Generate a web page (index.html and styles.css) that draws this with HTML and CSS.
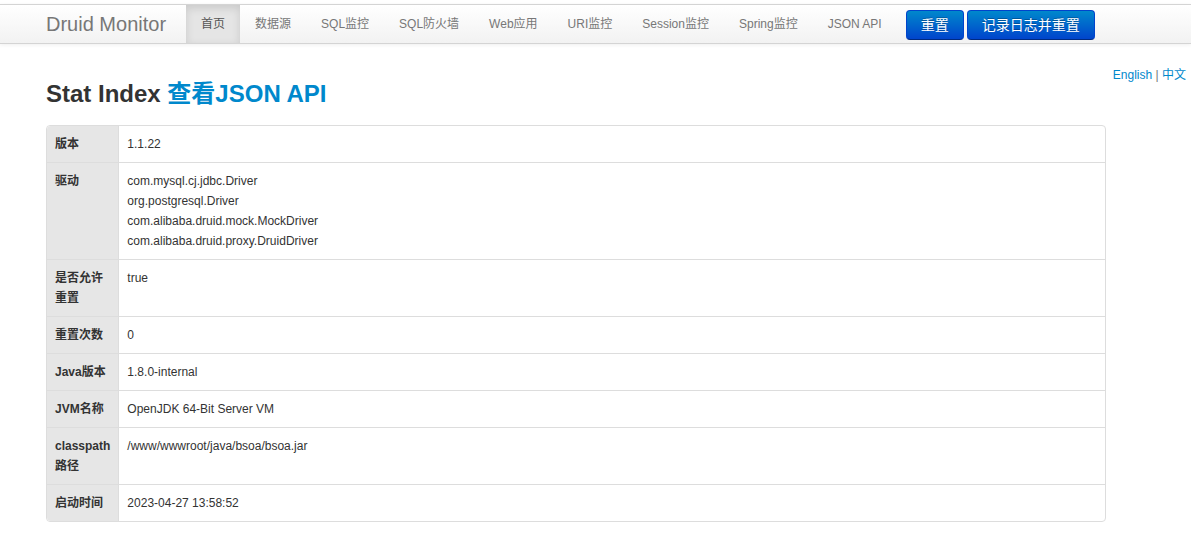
FILE: index.html
```html
<!DOCTYPE html>
<html lang="zh-CN">
<head>
<meta charset="UTF-8">
<title>Druid Stat Index</title>
<link rel="stylesheet" href="styles.css">
</head>
<body>
<div class="navbar">
  <div class="navbar-inner">
    <a class="brand" href="#">Druid Monitor</a>
    <ul class="nav">
      <li class="active"><a href="#">首页</a></li>
      <li><a href="#">数据源</a></li>
      <li><a href="#">SQL监控</a></li>
      <li><a href="#">SQL防火墙</a></li>
      <li><a href="#">Web应用</a></li>
      <li><a href="#">URI监控</a></li>
      <li><a href="#">Session监控</a></li>
      <li><a href="#">Spring监控</a></li>
      <li><a href="#">JSON API</a></li>
    </ul>
    <a class="btn btn-primary" href="#">重置</a>
    <a class="btn btn-primary" href="#">记录日志并重置</a>
  </div>
</div>

<div class="head-row">
  <h3>Stat Index <a href="#">查看JSON API</a></h3>
  <div class="lang"><a href="#">English</a> | <a href="#">中文</a></div>
</div>

<div class="container">
  <table class="stat">
    <tr><th>版本</th><td>1.1.22</td></tr>
    <tr><th>驱动</th><td>com.mysql.cj.jdbc.Driver<br>org.postgresql.Driver<br>com.alibaba.druid.mock.MockDriver<br>com.alibaba.druid.proxy.DruidDriver</td></tr>
    <tr><th>是否允许重置</th><td>true</td></tr>
    <tr><th>重置次数</th><td>0</td></tr>
    <tr><th>Java版本</th><td>1.8.0-internal</td></tr>
    <tr><th>JVM名称</th><td>OpenJDK 64-Bit Server VM</td></tr>
    <tr><th>classpath路径</th><td>/www/wwwroot/java/bsoa/bsoa.jar</td></tr>
    <tr><th>启动时间</th><td>2023-04-27 13:58:52</td></tr>
  </table>
</div>
</body>
</html>
```

FILE: styles.css
```css
body{
  margin: 0;
  padding-top: 4px;
  font-family: "Liberation Sans", "Noto Sans CJK SC", sans-serif;
  font-size: 12px;
  color: #333;
  background: #fff;
}
a{
  color: #0088cc;
  text-decoration: none;
}
.navbar-inner{
  display: flex;
  align-items: center;
  height: 38px;
  padding-left: 46px;
  background: linear-gradient(to bottom, #ffffff, #f2f2f2);
  border-top: 1px solid #d4d4d4;
  border-bottom: 1px solid #d4d4d4;
  box-shadow: 0 1px 4px rgba(0,0,0,.065);
}
.brand{
  padding-right: 20px;
  font-size: 20px;
  font-weight: 200;
  color: #777;
  line-height: 38px;
}
.nav{
  display: flex;
  margin: 0 9px 0 0;
  padding: 0;
  list-style: none;
  height: 38px;
}
.nav li a{
  display: block;
  padding: 0 15px;
  line-height: 38px;
  color: #777;
}
.nav li.active a{
  color: #555;
  background: #e5e5e5;
  box-shadow: inset 0 3px 8px rgba(0,0,0,.125);
}
.btn{
  display: inline-block;
  height: 28px;
  line-height: 28px;
  padding: 0 14px;
  margin: 2px 3px 0 0;
  font-size: 14px;
  border-radius: 4px;
}
.btn-primary{
  color: #fff;
  background: linear-gradient(to bottom, #0088cc, #0044cc);
  border: 1px solid #0044cc;
  border-bottom-color: #002a80;
  text-shadow: 0 -1px 0 rgba(0,0,0,.25);
}
.head-row{
  display: flex;
  justify-content: space-between;
  align-items: flex-start;
  padding: 0 5px 0 46px;
}
.head-row h3{
  margin: 35px 0 16px;
  font-size: 24px;
  line-height: 30px;
  font-weight: bold;
  color: #333;
}
.lang{
  margin-top: 24px;
  line-height: 14px;
  color: #777;
}
.container{
  padding-left: 46px;
}
.stat{
  width: 1060px;
  border: 1px solid #ddd;
  border-collapse: separate;
  border-spacing: 0;
  border-radius: 4px;
}
.stat th,
.stat td{
  padding: 8px;
  line-height: 20px;
  text-align: left;
  vertical-align: top;
  border-top: 1px solid #ddd;
}
.stat tr:first-child th,
.stat tr:first-child td{
  border-top: 0;
}
.stat th{
  width: 55px;
  background: #e6e6e6;
  font-weight: bold;
}
.stat tr:first-child th{ border-top-left-radius: 4px; }
.stat tr:last-child th{ border-bottom-left-radius: 4px; }
.stat td{
  border-left: 1px solid #ddd;
}
```
